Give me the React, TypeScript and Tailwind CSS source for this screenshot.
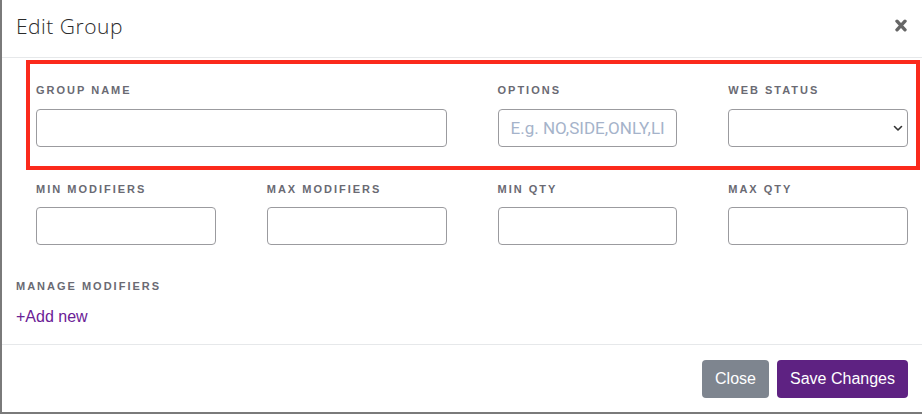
import React from 'react';

const labelCls =
  "block text-[11px] leading-[16px] font-bold tracking-[2px] uppercase text-[#6a6a73]";
const inputCls =
  "block w-full h-[38px] rounded-[4px] border border-[#9b9b9f] bg-white px-3 text-[16px] outline-none placeholder:text-[#a5b3ca]";

const Field: React.FC<{ label: string; placeholder?: string; select?: boolean; className?: string; gap: string }> = ({
  label,
  placeholder,
  select,
  className,
  gap,
}) => (
  <div className={className}>
    <label className={`${labelCls} ${gap}`}>{label}</label>
    {select ? (
      <div className="relative">
        <select className={`${inputCls} appearance-none`} defaultValue="">
          <option value=""></option>
          <option value="active">Active</option>
          <option value="inactive">Inactive</option>
        </select>
        <svg
          className="absolute right-[5px] top-[16px] pointer-events-none"
          width="10"
          height="7"
          viewBox="0 0 10 7"
        >
          <path d="M1.5 1.5 L5 5 L8.5 1.5" fill="none" stroke="#333" strokeWidth="1.6" strokeLinecap="round" strokeLinejoin="round" />
        </svg>
      </div>
    ) : (
      <input className={`${inputCls} text-[17px]`} placeholder={placeholder} style={{ fontFamily: 'Roboto, sans-serif' }} />
    )}
  </div>
);

export default function App() {
  return (
    <div className="w-[922px] h-[415px] bg-white" style={{ fontFamily: '"Liberation Sans", Arial, sans-serif' }}>
      <div className="h-[414px] bg-white border-l-2 border-b-2 border-[#7a7a7a] flex flex-col">
        {/* Header */}
        <div className="h-[58px] border-b border-[#e6e8ea] flex items-center justify-between pl-[14px] pr-[15px]">
          <h2
            className="text-[21px] font-light text-[#2b2b2b] tracking-[0.5px] -mt-[3px]"
            style={{ fontFamily: '"Open Sans", sans-serif' }}
          >
            Edit Group
          </h2>
          <button className="text-[#666] -mt-[6px]" aria-label="Close">
            <svg width="12" height="13" viewBox="0 0 12 13">
              <path d="M2 2.2 L10 10.8 M10 2.2 L2 10.8" stroke="#666" strokeWidth="3.4" strokeLinecap="round" />
            </svg>
          </button>
        </div>

        {/* Body */}
        <div className="flex-1">
          <div className="mt-[2px] ml-[24px] w-[894px] border-4 border-[#fb2a1c] pt-[18px] pb-[19px]">
            <div className="ml-[6px] w-[872px] grid grid-cols-4 gap-x-[51px]">
              <Field label="Group Name" className="col-span-2" gap="mb-[11px]" />
              <Field label="Options" placeholder="E.g. NO,SIDE,ONLY,LITE" gap="mb-[11px]" />
              <Field label="Web Status" select gap="mb-[11px]" />
            </div>
          </div>

          <div className="mt-[11px] ml-[34px] w-[872px] grid grid-cols-4 gap-x-[51px]">
            <Field label="Min Modifiers" gap="mb-[10px]" />
            <Field label="Max Modifiers" gap="mb-[10px]" />
            <Field label="Min Qty" gap="mb-[10px]" />
            <Field label="Max Qty" gap="mb-[10px]" />
          </div>

          <div className="ml-[14px] mt-[33px]">
            <div className={labelCls}>Manage Modifiers</div>
            <button className="mt-[11px] text-[16px] leading-[24px] text-[#6b2196]">+Add new</button>
          </div>
        </div>

        {/* Footer */}
        <div className="border-t border-[#e6e8ea] pt-[15px] pb-[14px] pr-[14px] flex justify-end gap-2">
          <button className="w-[67px] h-[38px] rounded-[4px] bg-[#7e858f] text-white text-[16px]">Close</button>
          <button className="w-[131px] h-[38px] rounded-[4px] bg-[#5e2282] text-white text-[16px]">Save Changes</button>
        </div>
      </div>
    </div>
  );
}
